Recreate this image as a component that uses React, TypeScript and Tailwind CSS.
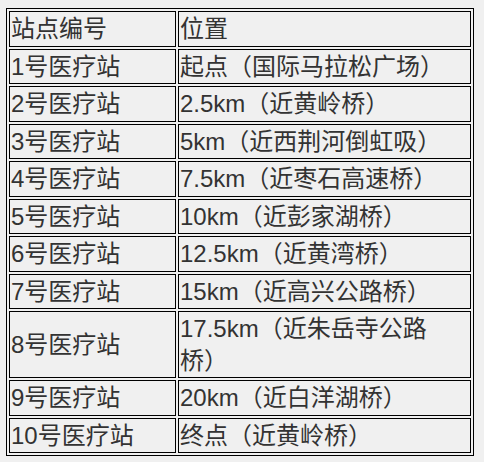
import React from "react";

const rows: [string, string][] = [
  ["1号医疗站", "起点（国际马拉松广场）"],
  ["2号医疗站", "2.5km（近黄岭桥）"],
  ["3号医疗站", "5km（近西荆河倒虹吸）"],
  ["4号医疗站", "7.5km（近枣石高速桥）"],
  ["5号医疗站", "10km（近彭家湖桥）"],
  ["6号医疗站", "12.5km（近黄湾桥）"],
  ["7号医疗站", "15km（近高兴公路桥）"],
  ["8号医疗站", "17.5km（近朱岳寺公路桥）"],
  ["9号医疗站", "20km（近白洋湖桥）"],
  ["10号医疗站", "终点（近黄岭桥）"],
];

export default function App() {
  return (
    <div
      className="min-h-[462px] w-[484px] bg-[#f0f0f0] pt-[8px] pl-[6px] text-[#333333]"
      style={{ fontFamily: '"Liberation Sans", "Noto Sans CJK SC", sans-serif' }}
    >
      <table className="border-separate border-spacing-[2px] border border-black text-[24px] leading-[31.5px]">
        <tbody>
          <tr>
            <td className="w-[167px] border border-black p-[1px] text-left align-middle">站点编号</td>
            <td className="w-[293px] border border-black py-[1px] pl-[1px] pr-[12px] text-left align-middle">位置</td>
          </tr>
          {rows.map(([a, b]) => (
            <tr key={a}>
              <td className="w-[167px] border border-black p-[1px] text-left align-middle">{a}</td>
              <td className="w-[293px] border border-black py-[1px] pl-[1px] pr-[12px] text-left align-middle">{b}</td>
            </tr>
          ))}
        </tbody>
      </table>
    </div>
  );
}
